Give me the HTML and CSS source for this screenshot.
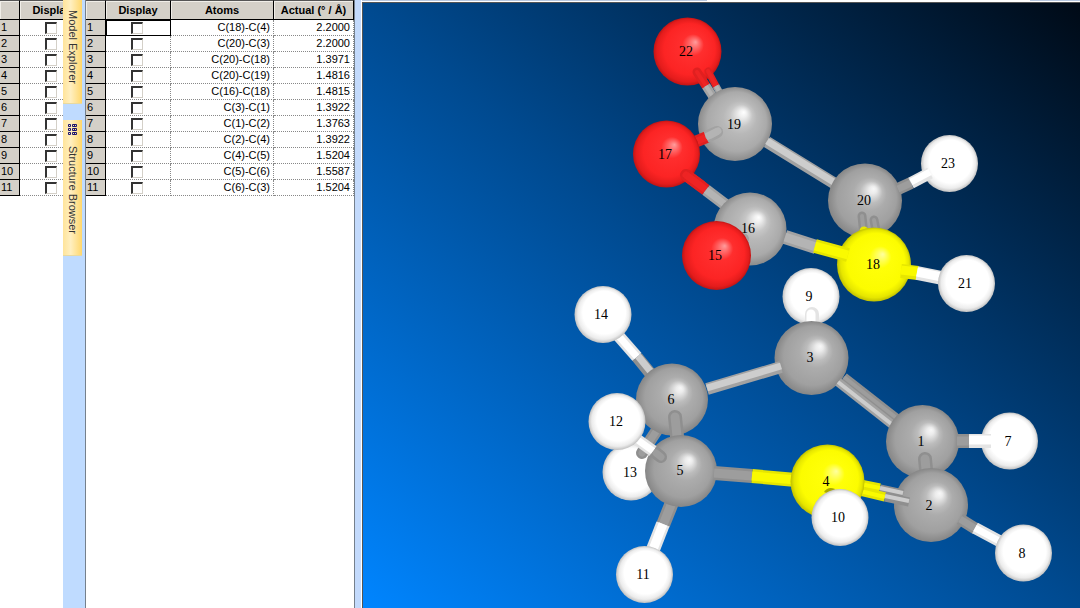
FILE: index.html
```html
<!DOCTYPE html>
<html lang="en">
<head>
<meta charset="utf-8">
<title>Model viewer</title>
<link rel="stylesheet" href="styles.css">
</head>
<body>
<div class="app">
  <section class="panel panel-back" aria-label="Measurements overview">
    <table class="grid grid-back">
      <colgroup><col class="col-num"><col class="col-display"></colgroup>
      <thead><tr><th></th><th>Display</th></tr></thead>
      <tbody>
        <tr><th>1</th><td class="tick"><input type="checkbox" aria-label="Display 1"></td></tr>
        <tr><th>2</th><td class="tick"><input type="checkbox" aria-label="Display 2"></td></tr>
        <tr><th>3</th><td class="tick"><input type="checkbox" aria-label="Display 3"></td></tr>
        <tr><th>4</th><td class="tick"><input type="checkbox" aria-label="Display 4"></td></tr>
        <tr><th>5</th><td class="tick"><input type="checkbox" aria-label="Display 5"></td></tr>
        <tr><th>6</th><td class="tick"><input type="checkbox" aria-label="Display 6"></td></tr>
        <tr><th>7</th><td class="tick"><input type="checkbox" aria-label="Display 7"></td></tr>
        <tr><th>8</th><td class="tick"><input type="checkbox" aria-label="Display 8"></td></tr>
        <tr><th>9</th><td class="tick"><input type="checkbox" aria-label="Display 9"></td></tr>
        <tr><th>10</th><td class="tick"><input type="checkbox" aria-label="Display 10"></td></tr>
        <tr><th>11</th><td class="tick"><input type="checkbox" aria-label="Display 11"></td></tr>
      </tbody>
    </table>
  </section>

  <nav class="tabs">
    <button class="tab tab-model" type="button">Model Explorer</button>
    <button class="tab tab-structure" type="button">
      <svg class="tab-icon" viewBox="0 0 10 12" width="10" height="12" aria-hidden="true">
        <path d="M.5 .5h2v2h-2zM.5 4.5h2v2h-2zM.5 8.5h2v2h-2zM4.500 .5h4v2h-4zM4.500 4.500h4v2h-4zM4.500 8.500h4v2h-4zM6.500 .5v2M6.500 4.500v2M6.500 8.500v2"/>
      </svg>
      Structure Browser
    </button>
  </nav>

  <section class="panel panel-main" aria-label="Measurements">
    <table class="grid">
      <colgroup><col class="col-num"><col class="col-display"><col class="col-atoms"><col class="col-actual"></colgroup>
      <thead><tr><th></th><th>Display</th><th>Atoms</th><th>Actual (° / Å)</th></tr></thead>
      <tbody>
        <tr><th>1</th><td class="tick active"><input type="checkbox" aria-label="Display C(18)-C(4)"></td><td>C(18)-C(4)</td><td>2.2000</td></tr>
        <tr><th>2</th><td class="tick"><input type="checkbox" aria-label="Display C(20)-C(3)"></td><td>C(20)-C(3)</td><td>2.2000</td></tr>
        <tr><th>3</th><td class="tick"><input type="checkbox" aria-label="Display C(20)-C(18)"></td><td>C(20)-C(18)</td><td>1.3971</td></tr>
        <tr><th>4</th><td class="tick"><input type="checkbox" aria-label="Display C(20)-C(19)"></td><td>C(20)-C(19)</td><td>1.4816</td></tr>
        <tr><th>5</th><td class="tick"><input type="checkbox" aria-label="Display C(16)-C(18)"></td><td>C(16)-C(18)</td><td>1.4815</td></tr>
        <tr><th>6</th><td class="tick"><input type="checkbox" aria-label="Display C(3)-C(1)"></td><td>C(3)-C(1)</td><td>1.3922</td></tr>
        <tr><th>7</th><td class="tick"><input type="checkbox" aria-label="Display C(1)-C(2)"></td><td>C(1)-C(2)</td><td>1.3763</td></tr>
        <tr><th>8</th><td class="tick"><input type="checkbox" aria-label="Display C(2)-C(4)"></td><td>C(2)-C(4)</td><td>1.3922</td></tr>
        <tr><th>9</th><td class="tick"><input type="checkbox" aria-label="Display C(4)-C(5)"></td><td>C(4)-C(5)</td><td>1.5204</td></tr>
        <tr><th>10</th><td class="tick"><input type="checkbox" aria-label="Display C(5)-C(6)"></td><td>C(5)-C(6)</td><td>1.5587</td></tr>
        <tr><th>11</th><td class="tick"><input type="checkbox" aria-label="Display C(6)-C(3)"></td><td>C(6)-C(3)</td><td>1.5204</td></tr>
      </tbody>
    </table>
  </section>

  <div class="splitter"></div>

  <main class="viewer">
    <div class="viewer-edge"></div>
    <div class="stage">
      <svg class="molecule" viewBox="363 3 717 605" preserveAspectRatio="xMinYMin meet" role="img" aria-label="Ball and stick model">
        <defs>
          <radialGradient id="carbon" cx=".5" cy=".5" r=".5" fx=".62" fy=".34">
            <stop offset="0" stop-color="#f8f8f8"/><stop offset=".1" stop-color="#ececec"/><stop offset=".3" stop-color="#bcbcbc"/><stop offset=".45" stop-color="#acacac"/><stop offset=".8" stop-color="#a0a0a0"/><stop offset="1" stop-color="#868686"/>
          </radialGradient>
          <radialGradient id="carbon-light" cx=".5" cy=".5" r=".5" fx=".62" fy=".34">
            <stop offset="0" stop-color="#fff"/><stop offset=".1" stop-color="#f0f0f0"/><stop offset=".3" stop-color="#c6c6c6"/><stop offset=".45" stop-color="#b8b8b8"/><stop offset=".8" stop-color="#aaa"/><stop offset="1" stop-color="#8c8c8c"/>
          </radialGradient>
          <radialGradient id="oxygen" cx=".5" cy=".5" r=".5" fx=".62" fy=".36">
            <stop offset="0" stop-color="#ff9c9c"/><stop offset=".12" stop-color="#ff7070"/><stop offset=".32" stop-color="#ff2e2e"/><stop offset=".75" stop-color="#fc2424"/><stop offset=".92" stop-color="#e41c1c"/><stop offset="1" stop-color="#c01414"/>
          </radialGradient>
          <radialGradient id="yellow" cx=".5" cy=".5" r=".5" fx=".62" fy=".36">
            <stop offset="0" stop-color="#ffffa0"/><stop offset=".12" stop-color="#ffff60"/><stop offset=".3" stop-color="#ffff08"/><stop offset=".78" stop-color="#fcfc00"/><stop offset=".92" stop-color="#e6e600"/><stop offset="1" stop-color="#c0c000"/>
          </radialGradient>
          <radialGradient id="hydrogen" cx=".5" cy=".5" r=".5" fx=".58" fy=".36">
            <stop offset="0" stop-color="#fff"/><stop offset=".75" stop-color="#fff"/><stop offset=".9" stop-color="#ececec"/><stop offset="1" stop-color="#c0c0c0"/>
          </radialGradient>
        </defs>

        <!-- upper ring -->
        <circle class="o" cx="687.5" cy="51.500" r="34"/>
        <g class="rod thin">
          <path class="red" d="M708 71L716 86"/><path class="red hi" d="M708 71L716 86"/>
          <path class="gray cut" d="M716 86L724 100"/><path class="gray hi cut" d="M716 86L724 100"/>
        </g>
        <g class="rod mid">
          <path class="red" d="M697 72L706 86"/><path class="red hi" d="M697 72L706 86"/>
          <path class="gray cut" d="M706 86L715 100"/><path class="gray hi cut" d="M706 86L715 100"/>
        </g>
        <circle class="cl" cx="735" cy="124" r="37"/>
        <g class="rod">
          <path class="red cut" d="M690 144L707 137"/><path class="red hi cut" d="M690 144L707 137"/>
          <path class="gray" d="M711 135L717 132"/><path class="gray cut" d="M706 137L717 132"/><path class="gray hi" d="M711 135L718 131"/><path class="gray hi cut" d="M706 137L718 131"/>
        </g>
        <circle class="o" cx="666.5" cy="154" r="33.500"/>
        <g class="rod">
          <path class="red" d="M686 175L701 186"/><path class="red cut" d="M686 175L706 190"/><path class="red hi" d="M686 175L701 186"/><path class="red hi cut" d="M686 175L706 190"/>
          <path class="gray cut" d="M706 190L731 209"/><path class="gray hi cut" d="M706 190L731 209"/>
        </g>
        <circle class="cl" cx="750" cy="229" r="36.500"/>
        <g class="rod"><path class="gray" d="M735 244L743 239"/><path class="gray hi" d="M735 244L743 239"/></g>
        <circle class="o" cx="716.5" cy="255.500" r="34.500"/>
        <g class="rod"><path class="gray cut" d="M767 142L845 190"/><path class="light hi cut" d="M767 141L845 189"/></g>
        <circle class="h" cx="949.5" cy="163.500" r="28.500"/>
        <circle class="c" cx="865" cy="200.500" r="37"/>
        <g class="rod">
          <path class="dark cut" d="M898 189L911 183"/><path class="gray hi cut" d="M898 189L911 183"/>
          <path class="white cut" d="M911 183L930 173"/><path class="white hi cut" d="M911 182L930 172"/>
        </g>
        <g class="rod mid">
          <path class="dark" d="M862 216L864 236"/><path class="gray hi" d="M862 216L864 236"/>
          <path class="dark" d="M874 220L877 236"/><path class="gray hi" d="M874 220L877 236"/>
          <path class="yel" d="M864 231L864 240"/>
        </g>
        <g class="rod wide"><path class="gray cut" d="M785 237L816 247"/><path class="gray hi cut" d="M785 237L816 247"/></g>
        <circle class="y" cx="874" cy="264.500" r="37"/>
        <g class="rod wide">
          <path class="yel cut" d="M815 246L848 255"/><path class="yel hi cut" d="M815 246L848 255"/>
          <path class="yel cut" d="M901 271L918 273"/><path class="yel hi cut" d="M901 270L918 272"/>
          <path class="white cut" d="M917 273L942 278"/><path class="white hi cut" d="M917 272L942 277"/>
        </g>
        <circle class="h" cx="966.5" cy="283.500" r="28.500"/>

        <!-- lower ring -->
        <circle class="h" cx="811" cy="296.500" r="28.500"/>
        <g class="rod wide"><path class="white" d="M812 314L812 330"/><path class="white hi" d="M811 314L811 330"/></g>
        <circle class="h" cx="631" cy="472" r="28.500"/>
        <g class="rod"><path class="dark" d="M659 427L642 453"/><path class="gray hi" d="M659 427L642 453"/></g>
        <g class="rod">
          <path class="white cut" d="M616 333L637 357"/><path class="white hi cut" d="M616 333L637 357"/>
          <path class="dark cut" d="M637 357L654 378"/><path class="light hi cut" d="M638 356L655 377"/>
        </g>
        <circle class="h" cx="603" cy="314.500" r="28.500"/>
        <circle class="c" cx="672" cy="399.500" r="36"/>
        <circle class="c" cx="811.5" cy="358" r="37"/>
        <g class="rod"><path class="gray cut" d="M707 389L781 367"/><path class="light hi cut" d="M707 388L781 366"/></g>
        <g class="rod wide"><path class="dark" d="M675 417L678 446"/><path class="gray hi" d="M675 417L678 446"/></g>
        <g class="rod wide">
          <path class="dark cut" d="M673 500L663 525"/><path class="gray hi cut" d="M673 500L663 525"/>
          <path class="white cut" d="M663 524L652 552"/><path class="white hi cut" d="M663 524L652 552"/>
        </g>
        <circle class="h" cx="644.5" cy="574.500" r="28.500"/>
        <circle class="c" cx="681" cy="471" r="36"/>
        <g class="rod">
          <path class="dark" d="M656 453L661 457"/><path class="dark cut" d="M652 450L661 457"/><path class="gray hi" d="M656 453L661 457"/>
          <path class="white cut" d="M635 438L653 451"/><path class="white hi cut" d="M635 438L653 451"/>
        </g>
        <circle class="h" cx="617" cy="421.500" r="28.500"/>
        <g class="rod wide">
          <path class="dark cut" d="M714 473L752 476"/><path class="gray hi cut" d="M714 473L752 476"/>
          <path class="yel cut" d="M752 476L796 480"/><path class="yel hi cut" d="M752 476L796 480"/>
        </g>
        <g class="rod mid">
          <path class="dark cut" d="M844 377L899 420"/><path class="gray hi cut" d="M844 377L899 420"/>
          <path class="gray cut" d="M838 382L894 426"/><path class="light hi cut" d="M838 382L894 426"/>
        </g>
        <circle class="c" cx="922.5" cy="441.500" r="36.500"/>
        <circle class="h" cx="1009.500" cy="441" r="28.500"/>
        <g class="rod wide">
          <path class="dark cut" d="M957 441L970 441"/><path class="gray hi cut" d="M957 441L970 441"/>
          <path class="white cut" d="M969 441L991 441"/><path class="white hi cut" d="M969 440L991 440"/>
        </g>
        <g class="rod wide"><path class="dark" d="M925 459L927 480"/><path class="gray hi" d="M925 459L927 480"/></g>
        <circle class="c" cx="931" cy="505" r="37"/>
        <g class="rod mid">
          <path class="yel cut" d="M860 484L880 488"/><path class="yel hi cut" d="M860 484L880 488"/>
          <path class="dark cut" d="M880 489L903 494"/><path class="light hi cut" d="M880 488L903 493"/>
          <path class="yel cut" d="M860 491L885 497"/><path class="yel hi cut" d="M860 491L885 497"/>
          <path class="dark cut" d="M885 497L909 502"/><path class="light hi cut" d="M885 496L909 501"/>
        </g>
        <g class="rod">
          <path class="dark cut" d="M960 519L976 529"/><path class="gray hi cut" d="M960 519L976 529"/>
          <path class="white cut" d="M975 528L1003 543"/><path class="white hi cut" d="M975 528L1003 543"/>
        </g>
        <circle class="h" cx="1023.500" cy="553" r="28.500"/>
        <circle class="y" cx="827.5" cy="481.500" r="37"/>
        <path class="stub" d="M824 492q4-6 11-3l-3 6z"/>
        <circle class="h" cx="840" cy="517.500" r="28.500"/>

        <g class="labels">
          <text x="686" y="56">22</text><text x="734" y="129">19</text><text x="665" y="159">17</text>
          <text x="748" y="233">16</text><text x="715" y="260">15</text><text x="948" y="168">23</text>
          <text x="864" y="205">20</text><text x="873" y="269">18</text><text x="965" y="288">21</text>
          <text x="809" y="301">9</text><text x="601" y="319">14</text><text x="671" y="404">6</text>
          <text x="616" y="426">12</text><text x="630" y="477">13</text><text x="680" y="475">5</text>
          <text x="643" y="579">11</text><text x="810" y="362">3</text><text x="921" y="446">1</text>
          <text x="929" y="510">2</text><text x="826" y="486">4</text><text x="838" y="522">10</text>
          <text x="1008" y="446">7</text><text x="1022" y="558">8</text>
        </g>
      </svg>
    </div>
  </main>
</div>
</body>
</html>
```

FILE: styles.css
```css
* { box-sizing: border-box; }

body {
  margin: 0;
  font-family: "Liberation Sans", Arial, sans-serif;
  font-size: 11px;
  color: #000;
  background: #fff;
}

.app {
  display: flex;
  min-height: 100vh;
}

.panel { background: #fff; overflow: hidden; }
.panel-back { flex: 0 0 63px; }
.panel-main { flex: 0 0 auto; border: solid #75808c; border-width: 0 1px; }

/* measurement grids */
.grid {
  width: 268px;
  table-layout: fixed;
  border-collapse: separate;
  border-spacing: 0;
}
.grid-back { width: 85px; }
.col-num { width: 20px; }
.col-display { width: 65px; }
.col-atoms { width: 103px; }
.grid th, .grid td { padding: 0; line-height: 15px; white-space: nowrap; }
.grid th { background: #d4d0c8; border: solid #000; border-width: 0 1px 1px 0; }
.grid thead th {
  height: 20px;
  font-weight: bold;
  border-top: 1px solid #555;
  box-shadow: inset 1px 1px #f0eee8;
}
.grid tbody th { height: 16px; padding-left: 1px; font-weight: normal; text-align: left; }
.grid td {
  height: 16px;
  padding-right: 3px;
  text-align: right;
  border: dotted #888;
  border-width: 0 1px 1px 0;
}
.grid td.tick { padding: 0; }
.grid td.active { outline: 1px solid #000; outline-offset: -1px; }

.tick input {
  appearance: none;
  display: block;
  width: 12px;
  height: 12px;
  margin: 2px auto 1px 25px;
  background: #fff;
  border: 1px solid #d4d0c8;
  border-top: 2px solid #333;
  border-left: 2px solid #333;
}

/* docked side tabs */
.tabs {
  flex: 0 0 22px;
  display: flex;
  flex-direction: column;
  align-items: flex-start;
  gap: 16px;
  background: #bfdbff;
}
.tab {
  display: flex;
  align-items: center;
  width: 19px;
  margin: 0;
  border: 0;
  border-bottom: 1px solid #e8d9a0;
  font: 11px/19px "Liberation Sans", Arial, sans-serif;
  color: #333;
  white-space: nowrap;
  writing-mode: vertical-rl;
  background: linear-gradient(90deg, #ffe49a, #ffefc0 40%, #ffd76c);
}
.tab-model { height: 104px; padding: 10px 0 0; }
.tab-structure { height: 136px; padding: 4px 0 0; gap: 10px; }
.tab-icon { fill: none; stroke: #1c1470; }

.splitter {
  flex: 0 0 6px;
  background: #c3dafc;
}

/* 3D view */
.viewer {
  flex: 1;
  min-width: 0;
  display: flex;
  flex-direction: column;
  border-left: 1px solid #fff;
}
.viewer-edge {
  height: 2px;
  background: linear-gradient(90deg, #b8c8e0 48%, #fff 48%, #fff 93%, #b8c8e0 93%) top / 100% 1px no-repeat #fff;
}
.stage {
  flex: 1;
  border: solid #555;
  border-width: 1px 0 0 1px;
  background: linear-gradient(to top right, #0085ff, #004a90 50%, #000a16);
}
.molecule { display: block; width: 100%; }

.c { fill: url(#carbon); }
.cl { fill: url(#carbon-light); }
.o { fill: url(#oxygen); }
.y { fill: url(#yellow); }
.h { fill: url(#hydrogen); }

.rod { fill: none; stroke-width: 12px; stroke-linecap: round; }
.rod.wide { stroke-width: 14px; }
.rod.mid { stroke-width: 9px; }
.rod.thin { stroke-width: 7px; }
.rod .hi { stroke-width: 7px; }
.rod.wide .hi { stroke-width: 9px; }
.rod.mid .hi, .rod.thin .hi { stroke-width: 4px; }
.rod .cut { stroke-linecap: butt; }
.red { stroke: #e02020; }
.red.hi { stroke: #ee2424; }
.gray { stroke: #a2a2a2; }
.gray.hi { stroke: #b4b4b4; }
.dark { stroke: #8f8f8f; }
.dark + .gray.hi { stroke: #9d9d9d; }
.light { stroke: #cdcdcd; }
.yel { stroke: #e6e600; }
.yel.hi { stroke: #fafa00; }
.white { stroke: #e4e4e4; }
.white.hi { stroke: #fff; }
.stub { fill: #a8a800; }

.labels {
  font-family: "Liberation Serif", "Times New Roman", serif;
  font-size: 14px;
  text-anchor: middle;
}
```
